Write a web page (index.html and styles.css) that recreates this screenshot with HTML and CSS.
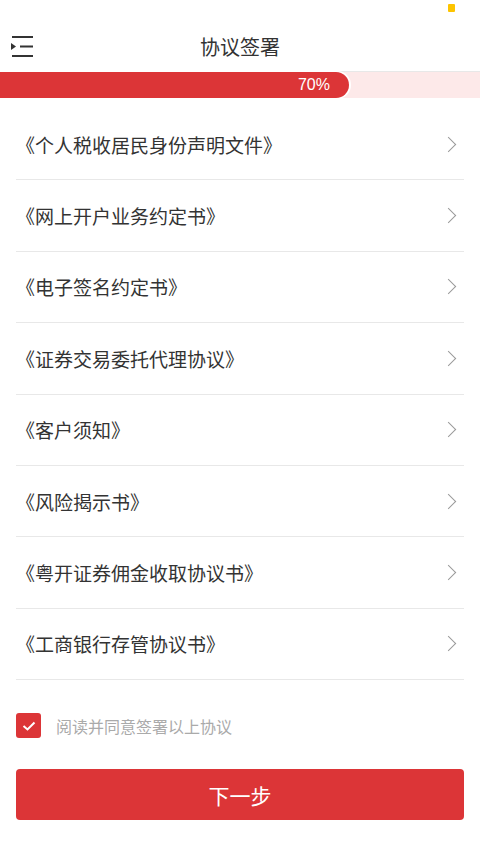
FILE: index.html
```html
<!DOCTYPE html>
<html lang="zh-CN">
<head>
    <meta charset="UTF-8">
    <meta name="viewport" content="width=device-width, initial-scale=1.0">
    <title>协议签署</title>
    <link rel="stylesheet" href="styles.css">
</head>
<body>
    <div class="status-bar">
        <span class="status-dot"></span>
    </div>
    <header class="nav">
        <button class="menu-btn" aria-label="菜单">
            <svg width="24" height="24" viewBox="0 0 24 24">
                <path d="M1 2h21M9 11.5h13M1 21h21" stroke="#333" stroke-width="2" fill="none"/>
                <path d="M0 8l5 3.5L0 15z" fill="#333"/>
            </svg>
        </button>
        <h1>协议签署</h1>
    </header>
    <div class="progress">
        <div class="progress-fill" style="width: 349px;">70%</div>
    </div>
    <main>
        <ul class="doc-list">
            <li>《个人税收居民身份声明文件》<span class="chev"></span></li>
            <li>《网上开户业务约定书》<span class="chev"></span></li>
            <li>《电子签名约定书》<span class="chev"></span></li>
            <li>《证券交易委托代理协议》<span class="chev"></span></li>
            <li>《客户须知》<span class="chev"></span></li>
            <li>《风险揭示书》<span class="chev"></span></li>
            <li>《粤开证券佣金收取协议书》<span class="chev"></span></li>
            <li>《工商银行存管协议书》<span class="chev"></span></li>
        </ul>
        <label class="agree">
            <span class="checkbox">
                <svg width="14" height="10" viewBox="0 0 14 10">
                    <path d="M1.5 5l4 3.5L12.5 1.5" stroke="#fff" stroke-width="2" fill="none"/>
                </svg>
            </span>
            阅读并同意签署以上协议
        </label>
        <button class="next-btn">下一步</button>
    </main>
</body>
</html>
```

FILE: styles.css
```css
body {
    margin: 0;
    padding: 0;
    background-color: #fff;
    font-family: "Noto Sans CJK SC", "Noto Sans", sans-serif;
    color: #333;
}
.status-bar {
    height: 26px;
    position: relative;
}
.status-dot {
    position: absolute;
    left: 448px;
    top: 4px;
    width: 7px;
    height: 8px;
    border-radius: 1px;
    background-color: #fdc400;
}
.nav {
    height: 44px;
    display: flex;
    align-items: center;
    justify-content: center;
    position: relative;
}
.nav h1 {
    margin: 0 0 4px;
    font-size: 20px;
    font-weight: normal;
    color: #333;
}
.menu-btn {
    position: absolute;
    left: 11px;
    top: 9px;
    padding: 0;
    border: none;
    background: none;
    display: flex;
}
.progress {
    height: 26px;
    margin-top: 1px;
    background-color: #fde9e9;
    border-top: 1px solid #e8e8e8;
}
.progress-fill {
    height: 26px;
    box-sizing: border-box;
    background-color: #dc3537;
    border-radius: 0 13px 13px 0;
    box-shadow: 1px 0 0 1px #fff;
    color: #fff;
    font-family: "Liberation Sans", Arial, sans-serif;
    font-size: 16px;
    line-height: 26px;
    text-align: right;
    padding-right: 19px;
}
main {
    padding: 0 16px;
}
.doc-list {
    list-style: none;
    margin: 11px 0 0;
    padding: 0;
}
.doc-list li {
    height: 70.4px;
    border-bottom: 1px solid #e8e8e8;
    display: flex;
    align-items: center;
    justify-content: space-between;
    font-size: 19px;
    color: #333;
}
.chev {
    width: 10px;
    height: 10px;
    border-right: 1.5px solid #999;
    border-bottom: 1.5px solid #999;
    transform: rotate(-45deg);
    margin-right: 10px;
}
.agree {
    display: flex;
    align-items: center;
    gap: 15px;
    margin-top: 33px;
    font-size: 16px;
    color: #aaa;
}
.checkbox {
    width: 25px;
    height: 25px;
    border-radius: 3px;
    background-color: #dc3537;
    display: flex;
    align-items: center;
    justify-content: center;
}
.next-btn {
    display: block;
    width: 100%;
    height: 51px;
    margin-top: 31px;
    border: none;
    border-radius: 4px;
    background-color: #dc3537;
    color: #fff;
    font-family: "Noto Sans CJK SC", sans-serif;
    font-size: 21px;
}
```
